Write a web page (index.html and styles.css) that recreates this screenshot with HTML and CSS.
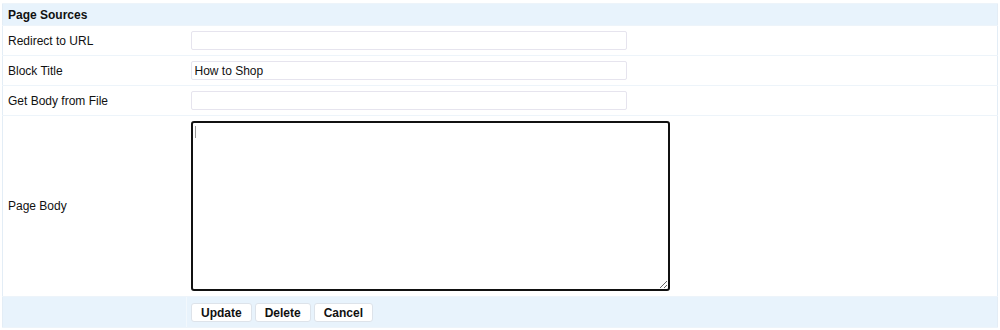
FILE: index.html
```html
<!DOCTYPE html>
<html>
<head>
<meta charset="utf-8">
<link rel="stylesheet" href="styles.css">
</head>
<body>
<div class="wrap">
<table class="form">
  <tr class="head"><th colspan="2">Page Sources</th></tr>
  <tr class="row"><td class="label">Redirect to URL</td><td class="field"><input class="text" type="text" value=""></td></tr>
  <tr class="row"><td class="label">Block Title</td><td class="field"><input class="text" type="text" value="How to Shop"></td></tr>
  <tr class="row"><td class="label">Get Body from File</td><td class="field"><input class="text" type="text" value=""></td></tr>
  <tr class="body-row"><td class="label">Page Body</td><td class="field area-cell"><div class="area-wrap"><textarea class="area"></textarea><span class="caret"></span></div></td></tr>
  <tr class="foot"><td class="label"></td><td class="field"><div class="buttons"><button class="btn">Update</button><button class="btn">Delete</button><button class="btn">Cancel</button></div></td></tr>
</table>
</div>
</body>
</html>
```
FILE: styles.css
```css
html, body { margin: 0; padding: 0; background: #fff; }
body { font-family: "Liberation Sans", Arial, sans-serif; font-size: 12px; color: #111; }
.wrap { padding: 3px 2px 0 2px; }
.form { width: 996px; border-collapse: collapse; border: 1px solid #e3edf6; }
.form td, .form th { border-top: 1px solid #edf4fa; border-bottom: 1px solid #edf4fa; border-left: 0; border-right: 0; padding: 0; }
.head th { background: #e8f3fc; height: 21px; text-align: left; font-weight: bold; padding-left: 5px; font-size: 12px; }
.row td { height: 29px; }
.label { width: 178px; padding-left: 5px !important; vertical-align: middle; }
.field { padding-left: 4px !important; vertical-align: middle; }
.text { display: block; box-sizing: border-box; width: 436px; height: 19px; border: 1px solid #e6e4ee; border-radius: 2px; font-family: "Liberation Sans", Arial, sans-serif; font-size: 12px; padding: 0 3px; margin: 0; color: #111; background: #fff; }
.area-cell { padding-top: 5px !important; padding-bottom: 5px !important; }
.area-wrap { position: relative; width: 479px; height: 170px; }
.area { display: block; box-sizing: border-box; width: 479px; height: 170px; border: 2px solid #111; border-radius: 3px; margin: 0; padding: 2px; resize: both; outline: none; font-family: "Liberation Sans", Arial, sans-serif; font-size: 12px; }
.caret { position: absolute; left: 4px; top: 5px; width: 1px; height: 12px; background: #999; }
.foot td { background: #e8f3fc; height: 30px; }
.foot .label { border-right: 1px solid #f2f8fd; }
.buttons { display: flex; gap: 3px; align-items: center; padding-top: 1px; }
.btn { height: 19px; padding: 0 9px; background: #fff; border: 1px solid #dde3ea; border-radius: 3px; font-family: "Liberation Sans", Arial, sans-serif; font-size: 12px; font-weight: bold; color: #111; margin: 0; }
```
